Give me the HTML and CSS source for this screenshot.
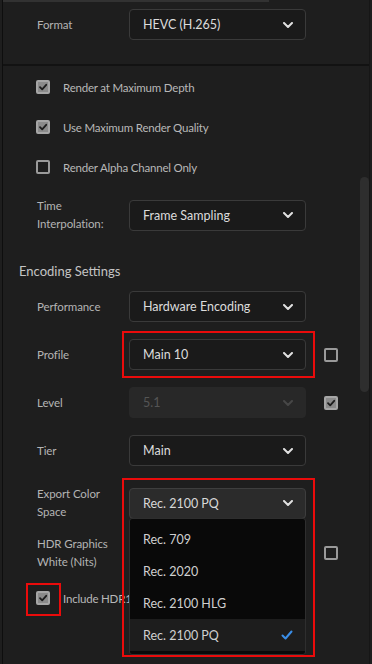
FILE: index.html
```html
<!DOCTYPE html>
<html lang="en">
<head>
    <meta charset="UTF-8">
    <meta name="viewport" content="width=device-width, initial-scale=1.0">
    <title>Export Settings</title>
    <link rel="stylesheet" href="styles.css">
</head>
<body>
    <div class="panel">
        <div class="top-strip"></div>

        <section class="format-section">
            <div class="row">
                <span class="label">Format</span>
                <div class="select">
                    <span>HEVC (H.265)</span>
                    <svg class="chevron" viewBox="0 0 10 6"><polyline points="1,1 5,5 9,1"/></svg>
                </div>
            </div>
        </section>

        <section class="options">
            <label class="check-row">
                <span class="box checked"><svg viewBox="0 0 10 10"><polyline points="2,5.2 4.2,7.4 8.2,2.8"/></svg></span>
                Render at Maximum Depth
            </label>
            <label class="check-row">
                <span class="box checked"><svg viewBox="0 0 10 10"><polyline points="2,5.2 4.2,7.4 8.2,2.8"/></svg></span>
                Use Maximum Render Quality
            </label>
            <label class="check-row">
                <span class="box"></span>
                Render Alpha Channel Only
            </label>

            <div class="row row-interp">
                <span class="label">Time<br>Interpolation:</span>
                <div class="select">
                    <span>Frame Sampling</span>
                    <svg class="chevron" viewBox="0 0 10 6"><polyline points="1,1 5,5 9,1"/></svg>
                </div>
            </div>
        </section>

        <h3 class="heading">Encoding Settings</h3>

        <section class="encoding">
            <div class="row">
                <span class="label">Performance</span>
                <div class="select">
                    <span>Hardware Encoding</span>
                    <svg class="chevron" viewBox="0 0 10 6"><polyline points="1,1 5,5 9,1"/></svg>
                </div>
            </div>

            <div class="row">
                <span class="label">Profile</span>
                <div class="select">
                    <span>Main 10</span>
                    <svg class="chevron" viewBox="0 0 10 6"><polyline points="1,1 5,5 9,1"/></svg>
                </div>
                <span class="box"></span>
                <span class="mark mark-profile"></span>
            </div>

            <div class="row">
                <span class="label">Level</span>
                <div class="select disabled">
                    <span>5.1</span>
                    <svg class="chevron" viewBox="0 0 10 6"><polyline points="1,1 5,5 9,1"/></svg>
                </div>
                <span class="box checked"><svg viewBox="0 0 10 10"><polyline points="2,5.2 4.2,7.4 8.2,2.8"/></svg></span>
            </div>

            <div class="row">
                <span class="label">Tier</span>
                <div class="select">
                    <span>Main</span>
                    <svg class="chevron" viewBox="0 0 10 6"><polyline points="1,1 5,5 9,1"/></svg>
                </div>
            </div>

            <div class="row row-color">
                <span class="label">Export Color<br>Space</span>
                <div class="select open">
                    <span>Rec. 2100 PQ</span>
                    <svg class="chevron" viewBox="0 0 10 6"><polyline points="1,1 5,5 9,1"/></svg>
                </div>
                <span class="mark mark-color"></span>
                <ul class="menu">
                    <li>Rec. 709</li>
                    <li>Rec. 2020</li>
                    <li>Rec. 2100 HLG</li>
                    <li class="selected">Rec. 2100 PQ
                        <svg class="tick" viewBox="0 0 12 10"><polyline points="1.5,5.5 4.5,8.5 10.5,1.5"/></svg>
                    </li>
                </ul>
            </div>

            <div class="row row-hdr">
                <span class="label">HDR Graphics<br>White (Nits)</span>
                <div class="spacer"></div>
                <span class="box"></span>
            </div>

            <label class="check-row check-hdr10">
                <span class="box checked"><svg viewBox="0 0 10 10"><polyline points="2,5.2 4.2,7.4 8.2,2.8"/></svg></span>
                <span>Include HDR10 Metadata</span>
                <span class="mark mark-hdr10"></span>
            </label>
        </section>
    </div>

    <div class="scrollbar"></div>
</body>
</html>
```

FILE: styles.css
```css
* {
    box-sizing: border-box;
}

body {
    margin: 0;
    background: #1e1e1e;
    font-family: Lato, "Open Sans", sans-serif;
    color: #b4b4b4;
    width: 372px;
    height: 664px;
    overflow: hidden;
    position: relative;
}

.panel {
    margin-left: 2px;
    border-left: 1px solid #0e0e0e;
    border-right: 1px solid #161616;
    width: 368px;
    height: 664px;
}

.top-strip {
    width: 266px;
    height: 2px;
    background: #323232;
}

.format-section {
    padding-top: 7px;
    padding-bottom: 24px;
    border-bottom: 2px solid #121212;
}

.row {
    position: relative;
    display: grid;
    grid-template-columns: 74px 177px 14px;
    column-gap: 18px;
    align-items: center;
    padding-left: 34px;
    height: 31px;
    margin-top: 17px;
}

.format-section .row {
    margin-top: 0;
}

.label {
    font-size: 11.5px;
    letter-spacing: -0.1px;
    line-height: 18px;
    color: #b4b4b4;
    white-space: nowrap;
}

.select {
    height: 31px;
    display: flex;
    align-items: center;
    justify-content: space-between;
    padding: 0 12px 0 13px;
    background: #1a1a1a;
    border: 1px solid #3a3a3a;
    border-radius: 4px;
    font-size: 12.5px;
    color: #dcdcdc;
}

.chevron {
    width: 10px;
    height: 6px;
    fill: none;
    stroke: #e0e0e0;
    stroke-width: 2;
    stroke-linecap: round;
    stroke-linejoin: round;
}

.select.disabled {
    background: #282828;
    border-color: #282828;
    color: #555;
}

.select.disabled .chevron {
    stroke: #474747;
}

.select.open {
    background: #2b2b2b;
    border-color: #3e3e3e;
    color: #d8d8d8;
}

.box {
    width: 14px;
    height: 14px;
    border: 2px solid #9a9a9a;
    border-radius: 2px;
    display: inline-flex;
    align-items: center;
    justify-content: center;
    flex-shrink: 0;
}

.box.checked {
    background: #8a8a8a;
    border-color: #a6a6a6;
}

.box svg {
    width: 10px;
    height: 10px;
    fill: none;
    stroke: #1c1c1c;
    stroke-width: 1.8;
    stroke-linecap: round;
    stroke-linejoin: round;
}

.options {
    padding-top: 1px;
}

.check-row {
    position: relative;
    display: flex;
    align-items: center;
    gap: 13px;
    height: 40px;
    padding-left: 33px;
    font-size: 11.5px;
    letter-spacing: -0.2px;
    color: #b8b8b8;
    white-space: nowrap;
}

.row-interp {
    margin-top: 10px;
}

.heading {
    margin: 33px 0 0 16px;
    height: 20px;
    line-height: 20px;
    font-size: 13px;
    font-weight: normal;
    color: #c4c4c4;
}

.encoding .row:first-child {
    margin-top: 10px;
}

.row-color {
    margin-top: 19px;
    z-index: 2;
}

.row-hdr {
    margin-top: 19px;
    height: 36px;
}

.spacer {
    height: 1px;
}

.check-hdr10 {
    margin-top: 11px;
    height: 32px;
}

.menu {
    position: absolute;
    left: 126px;
    top: 33px;
    width: 177px;
    height: 137px;
    margin: 0;
    padding: 4px 0;
    list-style: none;
    background: #090909;
    border: 1px solid #2e2e2e;
    border-radius: 3px;
}

.menu li {
    height: 32px;
    display: flex;
    align-items: center;
    justify-content: space-between;
    padding: 0 12px 0 13px;
    font-size: 12.5px;
    color: #d0d0d0;
}

.menu li.selected {
    background: #1d1d1d;
}

.tick {
    width: 12px;
    height: 10px;
    fill: none;
    stroke: #3a8ee8;
    stroke-width: 2;
    stroke-linecap: round;
    stroke-linejoin: round;
}

.mark {
    position: absolute;
    border: 2px solid #ea0b0b;
    pointer-events: none;
}

.mark-profile {
    left: 119px;
    top: -8px;
    width: 193px;
    height: 47px;
}

.mark-color {
    left: 119px;
    top: -7px;
    width: 193px;
    height: 179px;
    z-index: 3;
}

.mark-hdr10 {
    left: 23px;
    top: 1px;
    width: 35px;
    height: 33px;
}

.scrollbar {
    position: absolute;
    left: 360px;
    top: 177px;
    width: 9px;
    height: 215px;
    border-radius: 5px;
    background: #2e2e2e;
}
```
